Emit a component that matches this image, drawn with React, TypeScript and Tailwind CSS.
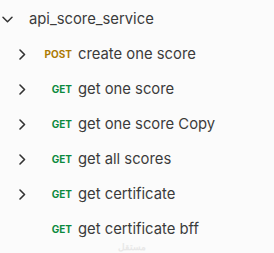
import React from "react";

const Right = () => (
  <svg width="7" height="11" viewBox="0 0 7 11" fill="none" className="shrink-0">
    <path d="M1 1 L5.5 5.5 L1 10" stroke="#333" strokeWidth="1.6" strokeLinecap="round" strokeLinejoin="round" />
  </svg>
);
const Down = () => (
  <svg width="11" height="7" viewBox="0 0 11 7" fill="none" className="shrink-0">
    <path d="M1 1.2 L5.5 5.7 L10 1.2" stroke="#333" strokeWidth="1.5" strokeLinecap="round" strokeLinejoin="round" />
  </svg>
);

const items: { m: string; t: string; chev: boolean }[] = [
  { m: "POST", t: "create one score", chev: true },
  { m: "GET", t: "get one score", chev: true },
  { m: "GET", t: "get one score Copy", chev: true },
  { m: "GET", t: "get all scores", chev: true },
  { m: "GET", t: "get certificate", chev: true },
  { m: "GET", t: "get certificate bff", chev: false },
];

export default function App() {
  return (
    <div className="relative w-[274px] h-[253px] bg-[#fbfbfb] overflow-hidden" style={{ fontFamily: "Inter, 'Noto Sans', sans-serif" }}>
      <div className="flex flex-col pt-[2px]">
        <div className="flex items-center h-[35px] pl-[2px]">
          <Down />
          <span className="ml-[16px] text-[14.8px] text-[#3b3b3b]">api_score_service</span>
        </div>
        {items.map((it, i) => (
          <div key={i} className="flex items-center h-[35px] pl-[19px]">
            <div className="w-[7px] flex">{it.chev ? <Right /> : null}</div>
            <div className="w-[52px] flex justify-end pr-[6px]">
              <span className={"text-[10px] font-bold " + (it.m === "POST" ? "text-[#ad7a03]" : "text-[#0b8a3e]")}>{it.m}</span>
            </div>
            <span className="text-[14.8px] text-[#3b3b3b] whitespace-nowrap">{it.t}</span>
          </div>
        ))}
      </div>
      <div className="absolute left-[118px] top-[241px] text-[#e8e8e8] pointer-events-none">
        <span className="block text-[9px] leading-[12px] font-bold">مستقل</span>
      </div>
    </div>
  );
}
